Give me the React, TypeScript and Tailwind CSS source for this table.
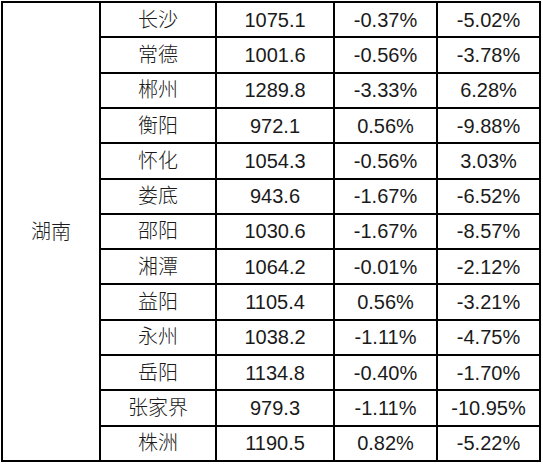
import React from "react";

const rows: [string, string, string, string][] = [
  ["长沙", "1075.1", "-0.37%", "-5.02%"],
  ["常德", "1001.6", "-0.56%", "-3.78%"],
  ["郴州", "1289.8", "-3.33%", "6.28%"],
  ["衡阳", "972.1", "0.56%", "-9.88%"],
  ["怀化", "1054.3", "-0.56%", "3.03%"],
  ["娄底", "943.6", "-1.67%", "-6.52%"],
  ["邵阳", "1030.6", "-1.67%", "-8.57%"],
  ["湘潭", "1064.2", "-0.01%", "-2.12%"],
  ["益阳", "1105.4", "0.56%", "-3.21%"],
  ["永州", "1038.2", "-1.11%", "-4.75%"],
  ["岳阳", "1134.8", "-0.40%", "-1.70%"],
  ["张家界", "979.3", "-1.11%", "-10.95%"],
  ["株洲", "1190.5", "0.82%", "-5.22%"],
];

const font = {
  fontFamily: '"Liberation Sans", "Noto Sans CJK SC", sans-serif',
};

export default function App() {
  return (
    <div className="w-[543px] h-[464px] bg-white pl-[1px] pt-[1px]">
      <div
        className="w-[540px] h-[461px] bg-black p-[2px] grid grid-cols-[96px_114px_116px_101px_101px] grid-rows-[repeat(13,1fr)] gap-[2px] text-[20px] text-[#1a1a1a] font-light"
        style={font}
      >
        <div className="bg-white row-span-13 flex items-center justify-center">
          湖南
        </div>
        {rows.map((r, i) => (
          <React.Fragment key={i}>
            {r.map((c, j) => (
              <div
                key={j}
                className="bg-white flex items-center justify-center leading-none"
              >
                {c}
              </div>
            ))}
          </React.Fragment>
        ))}
      </div>
    </div>
  );
}
